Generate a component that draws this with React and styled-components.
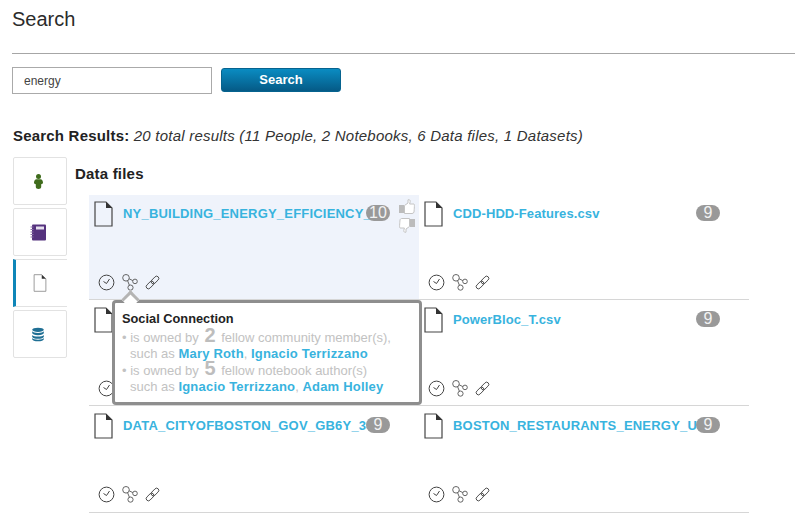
import React from "react";
import styled, { createGlobalStyle } from "styled-components";

const GlobalStyle = createGlobalStyle`
  html, body {
    margin: 0;
    padding: 0;
    background: #fff;
    font-family: "Liberation Sans", Arial, sans-serif;
    color: #222;
  }
`;

const Page = styled.div`
  width: 795px;
  height: 527px;
  box-sizing: border-box;
  padding: 8px 0 0 12px;
  overflow: hidden;
`;

const Title = styled.h1`
  margin: 0;
  height: 45px;
  border-bottom: 1px solid #a6a6a6;
  font-size: 20px;
  line-height: 23px;
  font-weight: 400;
  color: #2b2b2b;
`;

const SearchBar = styled.form`
  display: flex;
  align-items: flex-start;
  gap: 9px;
  margin-top: 13px;
`;

const SearchInput = styled.input`
  width: 200px;
  height: 27px;
  box-sizing: border-box;
  padding: 0 11px;
  border: 1px solid #aaa;
  background: #fff;
  font: 12px "Liberation Sans", Arial, sans-serif;
  color: #444;
  outline: none;
`;

const SearchButton = styled.button`
  width: 120px;
  height: 24px;
  margin-top: 1px;
  padding: 0 0 2px;
  border: 1px solid #06638f;
  border-radius: 3px;
  background: linear-gradient(#0a8cc2, #055a86);
  color: #fff;
  font: bold 13px "Liberation Sans", Arial, sans-serif;
`;

const Summary = styled.p`
  margin: 33px 0 0 1px;
  font-size: 15px;
  line-height: 18px;
  font-style: italic;
  letter-spacing: 0.225px;
  color: #333;

  strong {
    font-style: normal;
    letter-spacing: 0.2px;
    color: #222;
  }
`;

const Results = styled.div`
  display: flex;
  margin-top: 12px;
  margin-left: 1px;
`;

const Sidebar = styled.nav`
  display: flex;
  flex-direction: column;
  gap: 3px;
  width: 54px;
  margin-right: 8px;
`;

const Tab = styled.div`
  display: flex;
  align-items: center;
  justify-content: center;
  width: 54px;
  height: 48px;
  box-sizing: border-box;
  padding-right: 4px;
  background: #fff;
  border: 1px solid #e2e2e2;
  border-left: ${(p) => (p.$active ? "3px solid #0f86b8" : "1px solid #e2e2e2")};
  border-right: ${(p) => (p.$active ? "none" : "1px solid #e2e2e2")};
  border-radius: ${(p) => (p.$active ? "0" : "2px")};
`;

const Main = styled.section`
  flex: 1;
`;

const SectionTitle = styled.h2`
  margin: 9px 0 13px;
  font-size: 15px;
  line-height: 16px;
  font-weight: 700;
  letter-spacing: 0.2px;
  color: #222;
`;

const Grid = styled.div`
  display: grid;
  grid-template-columns: repeat(2, 330px);
  margin-left: 14px;
`;

const Card = styled.article`
  position: relative;
  height: ${(p) => p.$height}px;
  box-sizing: border-box;
  padding: ${(p) => 6 + p.$inset}px 0 0 5px;
  display: flex;
  flex-direction: column;
  justify-content: space-between;
  background: ${(p) => (p.$highlight ? "#eff3fb" : "#fff")};
  border-bottom: 1px solid #d6d6d6;
`;

const CardHead = styled.div`
  display: flex;
  align-items: flex-start;
  gap: 10px;
`;

const FileName = styled.a`
  display: block;
  width: 262px;
  margin-top: 3px;
  overflow: hidden;
  white-space: nowrap;
  font-size: 13px;
  line-height: 20px;
  font-weight: 700;
  letter-spacing: ${(p) => (p.$caps ? "0.2px" : "0.1px")};
  color: #38b3de;
`;

const Badge = styled.span`
  position: absolute;
  top: ${(p) => 10 + p.$inset}px;
  left: 277px;
  width: 24px;
  height: 16px;
  border-radius: 8px;
  background: #999;
  color: #f2f2f2;
  font-size: 16px;
  line-height: 16px;
  text-align: center;
`;

const Votes = styled.div`
  position: absolute;
  top: 4px;
  left: 310px;
  display: flex;
  flex-direction: column;
  gap: 4px;
`;

const CardFooter = styled.div`
  display: flex;
  align-items: center;
  gap: 7px;
  padding: 0 0 ${(p) => p.$gap}px 5px;
  margin-left: -1px;
`;

const Tooltip = styled.div`
  position: absolute;
  z-index: 2;
  top: 105px;
  left: 23px;
  width: 310px;
  height: 105px;
  box-sizing: border-box;
  padding: 7px 7px;
  background: #fff;
  border: 3px solid #8e8e8e;
  border-radius: 4px;
  font-size: 13px;
  color: #c2c2c2;

  &::before {
    content: "";
    position: absolute;
    top: -10px;
    left: 9px;
    width: 13px;
    height: 13px;
    background: #fff;
    border-top: 3px solid #b4b4b4;
    border-left: 3px solid #b4b4b4;
    box-sizing: border-box;
    transform: rotate(45deg);
  }
`;

const TooltipTitle = styled.div`
  font-size: 12.8px;
  font-weight: 700;
  line-height: 17px;
  margin-bottom: 3px;
  color: #222;
`;

const TooltipLine = styled.div`
  height: 16.4px;
  line-height: 16.4px;
  padding-left: 8px;
  text-indent: ${(p) => (p.$bullet ? "-8px" : "0")};
  white-space: nowrap;
`;

const Count = styled.b`
  font-size: 20px;
  line-height: 0;
  color: #bdbdbd;
  padding: 0 2px;
`;

const Person = styled.a`
  font-weight: 700;
  letter-spacing: 0.2px;
  color: #38b3de;
`;

const FileIcon = ({ w = 19, h = 26, color = "#444" }) => (
  <svg width={w} height={h} viewBox="0 0 19 26">
    <path d="M1 1H12L18 7V25H1Z" fill="none" stroke={color} strokeWidth="1.2" />
    <path d="M12 1L18 7H12Z" fill="#333" />
  </svg>
);

const ClockIcon = () => (
  <svg width="17" height="17" viewBox="0 0 17 17" fill="none" stroke="#444" strokeWidth="1">
    <circle cx="8.5" cy="8.5" r="7.4" />
    <path d="M5.5 7.5L8.5 9.5L11.5 5" />
  </svg>
);

const SocialIcon = () => (
  <svg width="16" height="17" viewBox="0 0 16 17" fill="none" stroke="#555" strokeWidth="0.9">
    <circle cx="4" cy="3.8" r="3.3" />
    <circle cx="13" cy="7.4" r="2.3" />
    <circle cx="8.5" cy="13.6" r="2.6" />
    <path d="M7.2 4.8L10.8 6.6M5.6 6.8L7.4 11.2" />
  </svg>
);

const LinkIcon = () => (
  <svg width="15" height="15" viewBox="0 0 15 15" fill="none" stroke="#444" strokeWidth="0.9">
    <g transform="rotate(-45 7.5 7.5)">
      <rect x="-0.5" y="5.3" width="9" height="4.4" rx="2.2" />
      <rect x="6.5" y="5.3" width="9" height="4.4" rx="2.2" />
    </g>
  </svg>
);

const ThumbIcon = ({ down }) => (
  <svg width="16" height="15" viewBox="0 0 16 15" style={down ? { transform: "scale(-1, -1)" } : undefined}>
    <rect x="0" y="6" width="5" height="8" fill="#bcbcbc" />
    <path
      d="M5.5 6.5L9 4V0.8C10.5 0.3 11.4 1.2 11.2 2.6L10.6 5H15C15.6 5.4 15.5 6.5 15 13C14.8 14 14 14.5 13 14.5H5.5Z"
      fill="#fff"
      stroke="#c4c4c4"
    />
  </svg>
);

const PersonIcon = () => (
  <svg width="9" height="15" viewBox="0 0 9 15" fill="#3f6c1c">
    <circle cx="4.5" cy="2.6" r="2.5" />
    <path d="M2.5 5.2H6.5C8 5.2 9 7 9 8.6C9 9.6 8.2 10.2 7.2 10.2V13C7.2 14.2 6 14.9 4.5 14.9S1.8 14.2 1.8 13V10.2C0.8 10.2 0 9.6 0 8.6C0 7 1 5.2 2.5 5.2Z" />
  </svg>
);

const NotebookIcon = () => (
  <svg width="16" height="17" viewBox="0 0 16 17">
    <rect x="2" y="0.5" width="14" height="16" rx="1" fill="#55327e" />
    <rect x="6" y="2.5" width="8" height="3" fill="#e6e0ee" />
    <path d="M0.5 3H3.5M0.5 5.5H3.5M0.5 8H3.5M0.5 10.5H3.5M0.5 13H3.5" stroke="#8a6fa8" strokeWidth="1.2" />
  </svg>
);

const DatabaseIcon = () => (
  <svg width="12" height="15" viewBox="0 0 13 15" fill="#1f6f94">
    <ellipse cx="6.5" cy="2.4" rx="6.3" ry="2.3" />
    <path d="M0.2 4V6C0.2 7.3 3 8.2 6.5 8.2S12.8 7.3 12.8 6V4C12 5.2 9.5 5.8 6.5 5.8S1 5.2 0.2 4Z" />
    <path d="M0.2 8V10C0.2 11.3 3 12.2 6.5 12.2S12.8 11.3 12.8 10V8C12 9.2 9.5 9.8 6.5 9.8S1 9.2 0.2 8Z" />
    <path d="M0.2 11.4V12.6C0.2 13.9 3 14.8 6.5 14.8S12.8 13.9 12.8 12.6V11.4C12 12.6 9.5 13.2 6.5 13.2S1 12.6 0.2 11.4Z" />
  </svg>
);

const files = [
  { name: "NY_BUILDING_ENERGY_EFFICIENCY_RATINGS", count: 10, height: 105, inset: 0, foot: 8, caps: true, highlight: true },
  { name: "CDD-HDD-Features.csv", count: 9, height: 105, inset: 0, foot: 8 },
  { name: "ENERGY_USAGE_2010.csv", count: 9, height: 106, inset: 1, foot: 8, caps: true },
  { name: "PowerBloc_T.csv", count: 9, height: 106, inset: 1, foot: 8 },
  { name: "DATA_CITYOFBOSTON_GOV_GB6Y_34CQ", count: 9, height: 107, inset: 1, foot: 9, caps: true },
  { name: "BOSTON_RESTAURANTS_ENERGY_USE", count: 9, height: 107, inset: 1, foot: 9, caps: true },
];

export default function App() {
  return (
    <Page>
      <GlobalStyle />
      <Title>Search</Title>
      <SearchBar onSubmit={(e) => e.preventDefault()}>
        <SearchInput defaultValue="energy" />
        <SearchButton>Search</SearchButton>
      </SearchBar>
      <Summary>
        <strong>Search Results:</strong> 20 total results (11 People, 2 Notebooks, 6 Data files, 1 Datasets)
      </Summary>
      <Results>
        <Sidebar>
          <Tab><PersonIcon /></Tab>
          <Tab><NotebookIcon /></Tab>
          <Tab $active><FileIcon w={14} h={18} color="#888" /></Tab>
          <Tab><DatabaseIcon /></Tab>
        </Sidebar>
        <Main>
          <SectionTitle>Data files</SectionTitle>
          <Grid>
            {files.map((file) => (
              <Card key={file.name} $highlight={file.highlight} $height={file.height} $inset={file.inset}>
                <CardHead>
                  <FileIcon />
                  <FileName $caps={file.caps}>{file.name}</FileName>
                </CardHead>
                <Badge $inset={file.inset}>{file.count}</Badge>
                {file.highlight && (
                  <Votes>
                    <ThumbIcon />
                    <ThumbIcon down />
                  </Votes>
                )}
                <CardFooter $gap={file.foot}>
                  <ClockIcon />
                  <SocialIcon />
                  <LinkIcon />
                </CardFooter>
                {file.highlight && (
                  <Tooltip>
                    <TooltipTitle>Social Connection</TooltipTitle>
                    <TooltipLine $bullet>• is owned by <Count>2</Count> fellow community member(s),</TooltipLine>
                    <TooltipLine>such as <Person>Mary Roth</Person>, <Person>Ignacio Terrizzano</Person></TooltipLine>
                    <TooltipLine $bullet>• is owned by <Count>5</Count> fellow notebook author(s)</TooltipLine>
                    <TooltipLine>such as <Person>Ignacio Terrizzano</Person>, <Person>Adam Holley</Person></TooltipLine>
                  </Tooltip>
                )}
              </Card>
            ))}
          </Grid>
        </Main>
      </Results>
    </Page>
  );
}
